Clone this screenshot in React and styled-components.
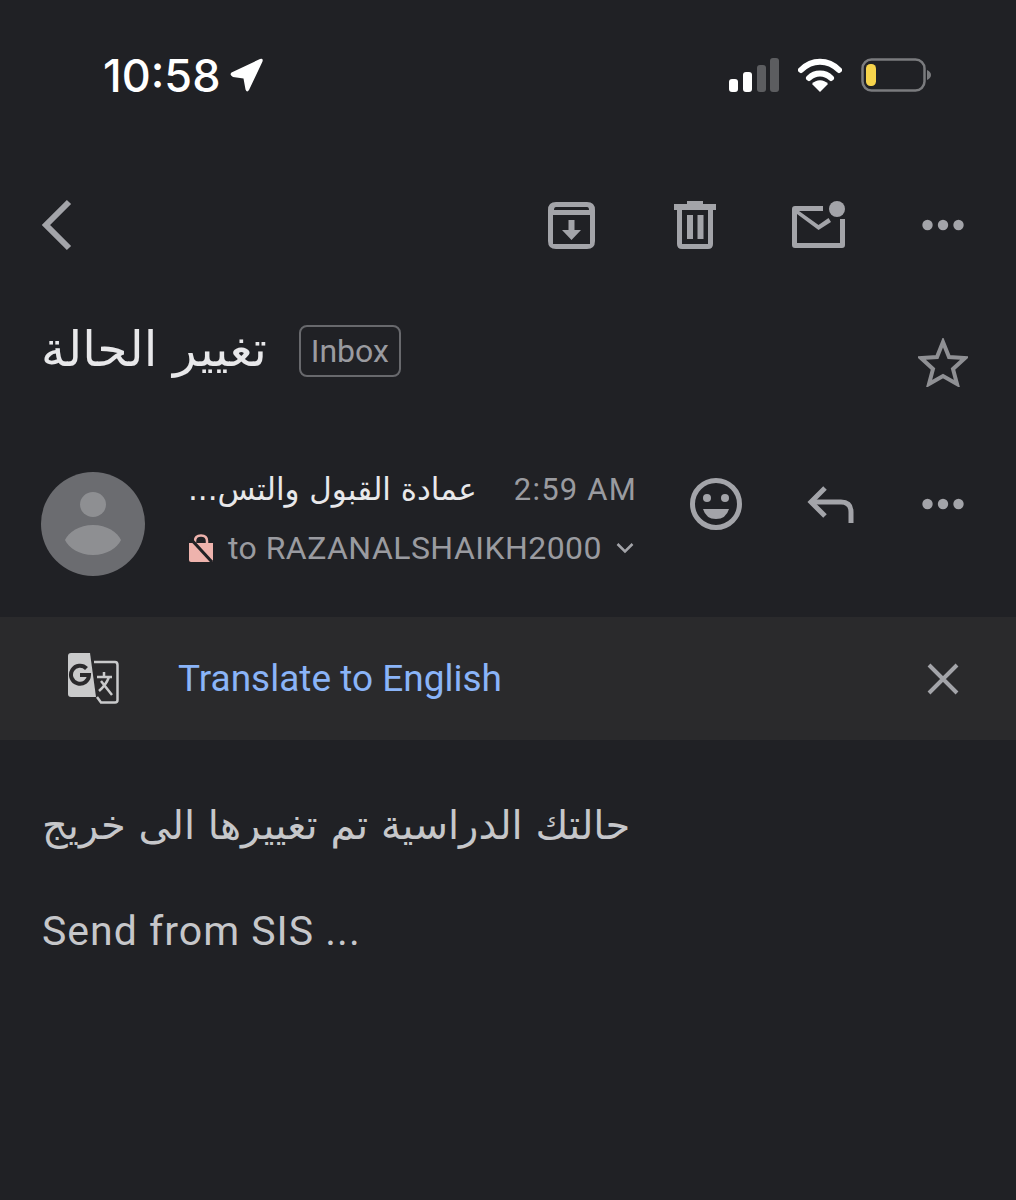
import React from 'react';
import styled, { createGlobalStyle } from 'styled-components';

const GlobalStyle = createGlobalStyle`
    html, body { margin: 0; padding: 0; background: #202125; }
    body { font-family: Roboto, "DejaVu Sans", sans-serif; }
`;

const Page = styled.div`
    width: 1016px;
    height: 1200px;
    background: #202125;
    overflow: hidden;
`;
const StatusBar = styled.div`
    display: flex;
    align-items: center;
    justify-content: space-between;
    height: 150px;
    padding: 0 85px 0 103px;
`;
const Clock = styled.div`
    display: flex;
    align-items: center;
    gap: 9px;
    font-family: Inter, sans-serif;
    font-size: 45px;
    font-weight: 500;
    color: #fff;
`;
const StatusIcons = styled.div`
    display: flex;
    align-items: center;
    gap: 19px;
`;
const Toolbar = styled.div`
    display: flex;
    align-items: center;
    height: 150px;
    padding: 0 52px 0 41px;
`;
const ToolbarActions = styled.div`
    display: flex;
    align-items: center;
    gap: 76px;
    margin-left: auto;
`;
const SubjectRow = styled.div`
    display: flex;
    align-items: flex-start;
    height: 172px;
    padding: 25px 48px 0 41px;
    box-sizing: border-box;
`;
const Subject = styled.h1`
    margin: 0;
    font-family: "DejaVu Sans", sans-serif;
    font-size: 49px;
    line-height: 50px;
    font-weight: 400;
    color: #e8e8ea;
`;
const Label = styled.span`
    box-sizing: border-box;
    width: 102px;
    height: 52px;
    margin-left: 32px;
    border: 2px solid #68696d;
    border-radius: 8px;
    font-size: 32px;
    line-height: 48px;
    text-align: center;
    color: #9a9ba0;
`;
const StarSlot = styled.div`
    margin: 13px 0 0 auto;
`;
const SenderRow = styled.div`
    display: flex;
    height: 145px;
    padding-left: 41px;
`;
const Avatar = styled.div`
    flex: none;
    width: 104px;
    height: 104px;
`;
const SenderInfo = styled.div`
    width: 449px;
    margin-left: 43px;
`;
const SenderTop = styled.div`
    display: flex;
    align-items: center;
    height: 34px;
    margin-bottom: 25px;
`;
const SenderName = styled.span`
    font-family: "DejaVu Sans", sans-serif;
    font-size: 31px;
    color: #e8e8ea;
`;
const SentTime = styled.span`
    margin-left: auto;
    font-size: 31px;
    letter-spacing: 1.2px;
    color: #9a9ba0;
`;
const Recipient = styled.div`
    display: flex;
    align-items: center;
    gap: 14px;
    height: 34px;
    font-size: 32px;
    letter-spacing: 0.45px;
    color: #9a9ba0;
`;
const SenderActions = styled.div`
    display: flex;
    align-items: center;
    gap: 65px;
    height: 64px;
    margin: 0 52px 0 auto;
`;
const TranslateBar = styled.div`
    display: flex;
    align-items: center;
    height: 123px;
    padding: 0 57px 0 68px;
    background: #2a2a2c;
`;
const TranslateLink = styled.a`
    margin-left: 59px;
    font-size: 37px;
    color: #8ab4f8;
`;
const CloseSlot = styled.div`
    margin-left: auto;
    line-height: 0;
`;
const Body = styled.div`
    padding: 60px 42px 0;
    color: #c6c7ca;
`;
const BodyLine = styled.div`
    width: fit-content;
    font-family: ${p => (p.$arabic ? '"DejaVu Sans"' : 'Roboto')}, sans-serif;
    font-size: ${p => (p.$arabic ? '40px' : '41px')};
    line-height: 50px;
    margin-bottom: 56px;
    letter-spacing: ${p => (p.$arabic ? '0' : '1px')};
`;

const grey = '#a3a4a9';

const Location = () => (
    <svg width="34" height="35" viewBox="0 0 34 35">
        <path d="M1.500 14.500 L30 1 Q33.500 0 32.500 3.500 L19 32 Q17 35 15.500 31.500 L13.500 20.500 L3 19 Q-1 17 1.500 14.500 Z" fill="#fff" />
    </svg>
);
const Signal = () => (
    <svg width="50" height="34" viewBox="0 0 50 34">
        <rect x="0" y="21" width="9" height="13" rx="3" fill="#fff" />
        <rect x="14" y="14" width="9" height="20" rx="3" fill="#fff" />
        <rect x="28" y="7" width="9" height="27" rx="3" fill="#5c5d60" />
        <rect x="41" y="0" width="9" height="34" rx="3" fill="#5c5d60" />
    </svg>
);
const Wifi = () => (
    <svg width="44" height="34" viewBox="0 0 44 34">
        <path d="M3 12 C14 1 30 1 41 12" fill="none" stroke="#fff" strokeWidth="6" strokeLinecap="round" />
        <path d="M11 20 C17 14 27 14 33 20" fill="none" stroke="#fff" strokeWidth="6" strokeLinecap="round" />
        <path d="M14 26 C18 21 26 21 30 26 L22 34 Z" fill="#fff" />
    </svg>
);
const Battery = () => (
    <svg width="70" height="34" viewBox="0 0 70 34">
        <rect x="1.500" y="1.500" width="62" height="31" rx="9" fill="none" stroke="#7a7b7e" strokeWidth="2.500" />
        <rect x="5" y="6" width="10" height="22" rx="4.500" fill="#f7d44c" />
        <path d="M66 12 Q70 14 70 17 Q70 20 66 22 Z" fill="#7a7b7e" />
    </svg>
);
const Back = () => (
    <svg width="32" height="52" viewBox="0 0 32 52">
        <path d="M28 3 L5 26 L28 49" fill="none" stroke={grey} strokeWidth="6" />
    </svg>
);
const Archive = () => (
    <svg width="50" height="47" viewBox="0 0 50 47">
        <path d="M8 0 H39 Q47 0 47 8 V39 Q47 47 39 47 H8 Q0 47 0 39 V8 Q0 0 8 0 Z M8 5 Q6 5 6 8 H41 Q41 5 39 5 Z M5 13 V42 H42 V13 Z" fill={grey} fillRule="evenodd" />
        <path d="M20.500 18 H26.500 V28 H33 L23.500 38 L14 28 H20.500 Z" fill={grey} />
    </svg>
);
const Trash = () => (
    <svg width="42" height="48" viewBox="0 0 42 48">
        <path d="M13 0 H29 V3 H42 V9 H0 V3 H13 Z" fill={grey} />
        <path d="M3 9 H39 V43 Q39 48 34 48 H8 Q3 48 3 43 Z M8 9 V43 H34 V9 Z" fill={grey} fillRule="evenodd" />
        <rect x="13" y="14" width="6" height="24" fill={grey} />
        <rect x="23.500" y="14" width="6" height="24" fill={grey} />
    </svg>
);
const MailDot = () => (
    <svg width="54" height="48" viewBox="0 0 54 48">
        <path d="M31 5 H3 Q0 5 0 8 V44 Q0 47 3 47 H50 Q53 47 53 44 V18 H48 V42 H5 V13 L26.500 29 L39 21 L36.500 17 L26.500 24 L7 10 H31 Z" fill={grey} />
        <circle cx="45" cy="8" r="8" fill={grey} />
    </svg>
);
const Dots = () => (
    <svg width="42" height="12" viewBox="0 0 42 12">
        <circle cx="5.500" cy="6" r="5.200" fill={grey} />
        <circle cx="21" cy="6" r="5.200" fill={grey} />
        <circle cx="36.500" cy="6" r="5.200" fill={grey} />
    </svg>
);
const Star = () => (
    <svg width="50" height="49" viewBox="0 0 50 49">
        <path d="M25 4 L31 19 L47 20 L35 31 L39 46 L25 38 L11 46 L15 31 L3 20 L19 19 Z" fill="none" stroke="#8f9094" strokeWidth="4" strokeLinejoin="miter" />
    </svg>
);
const Person = () => (
    <svg width="104" height="104" viewBox="0 0 104 104">
        <circle cx="52" cy="52" r="52" fill="#6b6c70" />
        <ellipse cx="52" cy="32.500" rx="13" ry="12.500" fill="#8e8f92" />
        <path d="M52 53 C66 53 76 60 80 68 C76 76 66 83 52 83 C38 83 28 76 24 68 C28 60 38 53 52 53 Z" fill="#8e8f92" />
    </svg>
);
const BlockedTag = () => (
    <svg width="26" height="28" viewBox="0 0 26 28">
        <path d="M1 9 H25 V26 Q25 28 23 28 H3 Q1 28 1 26 Z" fill="#eeb3ad" />
        <path d="M7 9 V7 Q7 1.500 13 1.500 Q19 1.500 19 7 V9" fill="none" stroke="#eeb3ad" strokeWidth="2.500" />
        <path d="M1 3 L24 28" stroke="#202125" strokeWidth="3" />
    </svg>
);
const SmallChevron = () => (
    <svg width="18" height="12" viewBox="0 0 18 12">
        <path d="M1.500 2 L9 9.500 L16.500 2" fill="none" stroke={grey} strokeWidth="2.500" />
    </svg>
);
const Smiley = () => (
    <svg width="52" height="52" viewBox="0 0 52 52">
        <circle cx="26" cy="26" r="23.500" fill="none" stroke={grey} strokeWidth="5" />
        <circle cx="17" cy="20" r="4" fill={grey} />
        <circle cx="35" cy="20" r="4" fill={grey} />
        <path d="M13 31 H39 Q36 41 26 41 Q16 41 13 31 Z" fill={grey} />
    </svg>
);
const Reply = () => (
    <svg width="50" height="37" viewBox="0 0 50 37">
        <path d="M18 2 L4 16 L18 30" fill="none" stroke={grey} strokeWidth="5" />
        <path d="M4 16 H34 Q44 16 44 26 V37" fill="none" stroke={grey} strokeWidth="5" />
    </svg>
);
const TranslateIcon = () => (
    <svg width="51" height="51" viewBox="0 0 51 51">
        <path d="M26 9 H47 Q49.500 9 49.500 12 V47 Q49.500 49.500 47 49.500 H33 L29 44" fill="none" stroke="#c9cacb" strokeWidth="2.500" />
        <path d="M3 0 H22 L28 44 H3 Q0 44 0 41 V3 Q0 0 3 0 Z" fill="#c9cacb" />
        <path d="M18.500 15.500 A9 9 0 1 0 21 22 H12" fill="none" stroke="#2a2a2c" strokeWidth="4" />
        <path d="M29 24 H44 M36 19 V24 M41 24 Q38 32 31 38 M33 28 L44 42" fill="none" stroke="#c9cacb" strokeWidth="2.500" />
    </svg>
);
const Close = () => (
    <svg width="32" height="32" viewBox="0 0 32 32">
        <path d="M2 2 L30 30 M30 2 L2 30" stroke={grey} strokeWidth="4" />
    </svg>
);

const App = () => {
    return (
        <Page>
            <GlobalStyle />
            <StatusBar>
                <Clock>10:58<Location /></Clock>
                <StatusIcons>
                    <Signal />
                    <Wifi />
                    <Battery />
                </StatusIcons>
            </StatusBar>
            <Toolbar>
                <Back />
                <ToolbarActions>
                    <Archive />
                    <Trash />
                    <MailDot />
                    <Dots />
                </ToolbarActions>
            </Toolbar>
            <SubjectRow>
                <Subject dir="rtl">تغيير الحالة</Subject>
                <Label>Inbox</Label>
                <StarSlot><Star /></StarSlot>
            </SubjectRow>
            <SenderRow>
                <Avatar><Person /></Avatar>
                <SenderInfo>
                    <SenderTop>
                        <SenderName dir="rtl">عمادة القبول والتس...</SenderName>
                        <SentTime>2:59 AM</SentTime>
                    </SenderTop>
                    <Recipient>
                        <BlockedTag />
                        <span>to RAZANALSHAIKH2000</span>
                        <SmallChevron />
                    </Recipient>
                </SenderInfo>
                <SenderActions>
                    <Smiley />
                    <Reply />
                    <Dots />
                </SenderActions>
            </SenderRow>
            <TranslateBar>
                <TranslateIcon />
                <TranslateLink>Translate to English</TranslateLink>
                <CloseSlot><Close /></CloseSlot>
            </TranslateBar>
            <Body>
                <BodyLine $arabic dir="rtl">حالتك الدراسية تم تغييرها الى خريج</BodyLine>
                <BodyLine>Send from SIS ...</BodyLine>
            </Body>
        </Page>
    );
};

export default App;
